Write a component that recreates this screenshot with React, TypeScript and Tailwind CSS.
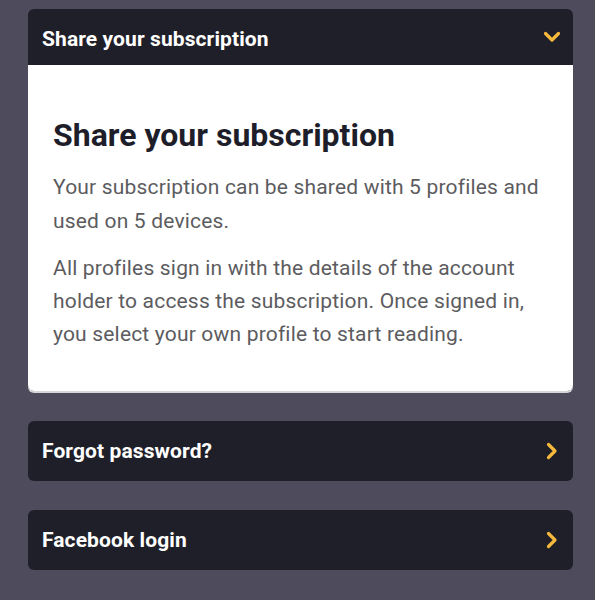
const ChevronDown = () => (
  <svg width="18" height="12" viewBox="0 0 18 12" fill="none">
    <path d="M2.5 2.5 9 9l6.5-6.5" stroke="#f6b93b" strokeWidth="3.2" strokeLinecap="round" strokeLinejoin="round" />
  </svg>
);

const ChevronRight = () => (
  <svg width="12" height="18" viewBox="0 0 12 18" fill="none">
    <path d="M2.5 2.5 9 9l-6.5 6.5" stroke="#f6b93b" strokeWidth="3.2" strokeLinecap="round" strokeLinejoin="round" />
  </svg>
);

const LinkRow = ({ label }: { label: string }) => (
  <button className="w-full h-[60px] flex items-center justify-between pl-[14px] pr-[15px] bg-[#1f1f29] rounded-md text-white text-[21px] font-bold tracking-[0.1px]">
    <span className="pt-[2px]">{label}</span>
    <ChevronRight />
  </button>
);

export default function App() {
  return (
    <main
      className="min-h-screen bg-[#4d4b5c] pl-[28px] pr-[22px] pt-[9px] pb-[30px]"
      style={{ fontFamily: "Roboto, 'Noto Sans', sans-serif" }}
    >
      {/* Expanded accordion */}
      <section className="rounded-md shadow-[0_2px_0_#d6d6da]">
        <div className="h-[56px] flex items-center justify-between pl-[14px] pr-[12px] bg-[#1f1f29] rounded-t-md">
          <h2 className="text-white text-[21px] font-bold tracking-[0.1px] pt-[6px]">Share your subscription</h2>
          <ChevronDown />
        </div>
        <div className="bg-white rounded-b-md px-[25px] pt-[51px] pb-[40px]">
          <h3 className="text-[32px] leading-[38px] font-bold text-[#1e1e2a] mb-[16px]">
            Share your subscription
          </h3>
          <p className="text-[21px] leading-[34px] tracking-[0.18px] text-[#5c5c60] mb-[14px]">
            Your subscription can be shared with 5 profiles and used on 5 devices.
          </p>
          <p className="text-[21px] leading-[33px] tracking-[0.18px] text-[#5c5c60]">
            All profiles sign in with the details of the account holder to access the subscription. Once signed in,
            you select your own profile to start reading.
          </p>
        </div>
      </section>

      <div className="mt-[30px] flex flex-col gap-[29px]">
        <LinkRow label="Forgot password?" />
        <LinkRow label="Facebook login" />
      </div>
    </main>
  );
}
